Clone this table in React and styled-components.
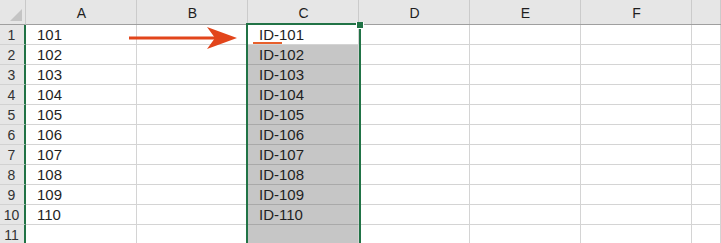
import React from 'react';
import styled, { createGlobalStyle } from 'styled-components';

const GlobalStyle = createGlobalStyle`
  html, body {
    margin: 0;
    padding: 0;
    background: #ffffff;
    overflow: hidden;
  }
`;

const COLS = ['A', 'B', 'C', 'D', 'E', 'F'];
const ROWS = 11;

const Sheet = styled.div`
  position: relative;
  width: 721px;
  height: 243px;
  overflow: hidden;
  font-family: 'Liberation Sans', Arial, sans-serif;
`;

const Grid = styled.div`
  display: grid;
  grid-template-columns: 26px repeat(6, 111px) 1fr;
  grid-template-rows: 25px repeat(${ROWS}, 20px);
`;

const Corner = styled.div`
  position: relative;
  background: #e6e6e6;
  border-bottom: 1px solid #9f9f9f;
  border-right: 1px solid #c9c9c9;
  box-sizing: border-box;

  &::after {
    content: '';
    position: absolute;
    right: 3px;
    bottom: 3px;
    width: 0;
    height: 0;
    border-left: 12px solid transparent;
    border-bottom: 12px solid #c4c4c4;
  }
`;

const ColHeader = styled.div`
  display: flex;
  align-items: center;
  justify-content: center;
  background: #e6e6e6;
  border-bottom: 1px solid #9f9f9f;
  box-sizing: border-box;
  box-shadow: inset -1px 0 0 #cbcbcb;
  font-size: 14px;
  color: #1e1e1e;
  padding-top: 1px;
`;

const RowHeader = styled.div`
  display: flex;
  align-items: center;
  justify-content: center;
  background: #e6e6e6;
  border-right: 2px solid #217346;
  border-bottom: 1px solid #d2d2d2;
  box-sizing: border-box;
  font-size: 14px;
  color: #333;
  padding-right: 1px;
`;

const Cell = styled.div`
  display: flex;
  align-items: center;
  padding-left: 11px;
  background: ${({ $selected }) => ($selected ? '#c6c6c6' : '#ffffff')};
  border-right: 1px solid #d4d4d4;
  border-bottom: 1px solid ${({ $selected }) => ($selected ? '#a9a9a9' : '#d4d4d4')};
  box-sizing: border-box;
  font-size: 15px;
  color: #1f1f1f;
  white-space: nowrap;
`;

const Selection = styled.div`
  position: absolute;
  left: 246px;
  top: 23px;
  width: 115px;
  height: 240px;
  border: 2px solid #217346;
  box-sizing: border-box;
  pointer-events: none;
`;

const FillHandle = styled.div`
  position: absolute;
  left: 356px;
  top: 22px;
  width: 6px;
  height: 6px;
  background: #217346;
  border: 1px solid #ffffff;
  border-top: none;
`;

const Annotations = styled.svg`
  position: absolute;
  left: 0;
  top: 0;
  pointer-events: none;
`;

const cellValue = (col, row) => {
  if (row > 10) return '';
  const n = 100 + row;
  if (col === 'A') return String(n);
  if (col === 'C') return `ID-${n}`;
  return '';
};

export default function App() {
  return (
    <>
      <GlobalStyle />
      <Sheet>
        <Grid>
          <Corner />
          {COLS.map((c) => (
            <ColHeader key={c}>{c}</ColHeader>
          ))}
          <ColHeader />
          {Array.from({ length: ROWS }, (_, i) => {
            const row = i + 1;
            return (
              <React.Fragment key={row}>
                <RowHeader>{row}</RowHeader>
                {COLS.map((c) => (
                  <Cell key={c} $selected={c === 'C' && row > 1}>
                    {cellValue(c, row)}
                  </Cell>
                ))}
                <Cell />
              </React.Fragment>
            );
          })}
        </Grid>

        <Selection />
        <FillHandle />

        {/* arrow pointing at C1 and the mark under its prefix */}
        <Annotations width="721" height="243" viewBox="0 0 721 243">
          <line x1="129" y1="38" x2="216" y2="38" stroke="#e2451b" strokeWidth="3" />
          <path d="M237 38 L207 27 L215 38 L207 49 Z" fill="#e2451b" />
          <line x1="253" y1="43" x2="282" y2="43" stroke="#e8602c" strokeWidth="2" />
        </Annotations>
      </Sheet>
    </>
  );
}
